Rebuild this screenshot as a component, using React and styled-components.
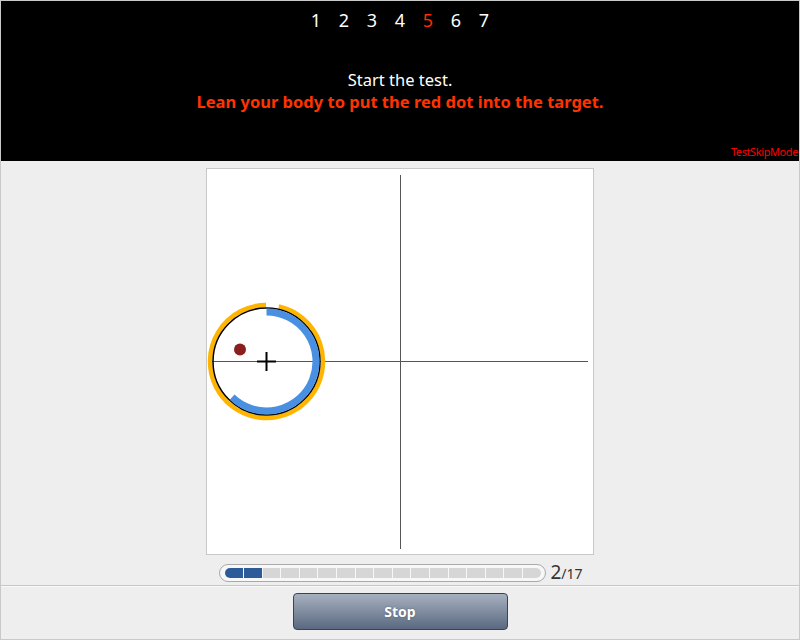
import React from 'react';
import styled, { createGlobalStyle } from 'styled-components';

const GlobalStyle = createGlobalStyle`
  html, body {
    margin: 0;
    padding: 0;
    background: #eeeeee;
  }
  * {
    box-sizing: border-box;
  }
`

const Frame = styled.div`
  width: 800px;
  height: 640px;
  border: 1px solid #c9c9c9;
  display: flex;
  flex-direction: column;
  background: #eeeeee;
  font-family: "Noto Sans", "Open Sans", sans-serif;
  overflow: hidden;
`

const Header = styled.header`
  height: 160px;
  background: #000;
  display: flex;
  flex-direction: column;
  align-items: center;
  position: relative;
`

const Steps = styled.div`
  display: flex;
  margin-top: 6px;
`

const Step = styled.span`
  width: 28px;
  text-align: center;
  font-size: 18px;
  line-height: 26px;
  color: ${props => props.current ? '#ff2a00' : '#ffffff'};
`

const Message = styled.div`
  margin-top: 36px;
  text-align: center;
  font-size: 16.5px;
  line-height: 22px;
`

const Plain = styled.div`
  color: #fff;
`

const Instruction = styled.div`
  color: #ff3300;
  font-weight: 700;
`

const SkipMode = styled.span`
  position: absolute;
  right: 1px;
  bottom: 2px;
  color: #ff0000;
  font-size: 11px;
  letter-spacing: -0.4px;
`

const Main = styled.main`
  flex: 1;
  display: flex;
  flex-direction: column;
  align-items: center;
  padding-top: 7px;
`

const Chart = styled.div`
  width: 388px;
  height: 387px;
  background: #fff;
  border: 1px solid #c8c8c8;
  svg {
    display: block;
  }
`

const ProgressRow = styled.div`
  margin-top: 7px;
  margin-left: 2px;
  display: flex;
  align-items: center;
  gap: 4px;
`

const Track = styled.div`
  width: 327px;
  height: 18px;
  border: 1px solid #a9a9a9;
  border-radius: 9px;
  background: #f7f7f7;
  padding: 3px 5px 3px 5px;
  display: flex;
  gap: 1px;
`

const Segment = styled.div`
  flex: 1;
  height: 10px;
  background: ${props => props.filled ? '#2d5b99' : '#d6d6d6'};
  &:first-child {
    border-radius: 5px 0 0 5px;
  }
  &:last-child {
    border-radius: 0 5px 5px 0;
  }
`

const Count = styled.span`
  color: #333;
  font-size: 19px;
  line-height: 20px;
  small {
    font-size: 14px;
  }
`

const Footer = styled.footer`
  height: 54px;
  border-top: 1px solid #c6c6c6;
  box-shadow: inset 0 1px 0 #f9f9f9;
  display: flex;
  justify-content: center;
  padding-top: 7px;
`

const StopButton = styled.button`
  width: 215px;
  height: 37px;
  border: 1px solid #3b4352;
  border-radius: 4px;
  background: linear-gradient(#a6b1bf, #5a6981);
  color: #fff;
  font-family: inherit;
  font-weight: 700;
  font-size: 14px;
  text-shadow: 0 0 2px rgba(0, 0, 0, 0.35);
  cursor: pointer;
`

const point = (cx, cy, r, deg) => {
  const a = (deg * Math.PI) / 180
  return [cx + r * Math.sin(a), cy - r * Math.cos(a)]
}

const arc = (cx, cy, r, from, to) => {
  const [x1, y1] = point(cx, cy, r, from)
  const [x2, y2] = point(cx, cy, r, to)
  const large = to - from > 180 ? 1 : 0
  return `M ${x1} ${y1} A ${r} ${r} 0 ${large} 1 ${x2} ${y2}`
}

const Target = ({ cx, cy }) => (
  <g>
    <path d={arc(cx, cy, 56.5, 12.5, 359.5)} fill="none" stroke="#ffb400" strokeWidth="4.5" />
    <circle cx={cx} cy={cy} r="53.5" fill="none" stroke="#000" strokeWidth="1.5" />
    <path d={arc(cx, cy, 49.5, 0, 224)} fill="none" stroke="#4a90e2" strokeWidth="7" />
    <line x1={cx - 9.5} y1={cy} x2={cx + 9.5} y2={cy} stroke="#000" strokeWidth="2" />
    <line x1={cx} y1={cy - 9.5} x2={cx} y2={cy + 9.5} stroke="#000" strokeWidth="2" />
  </g>
)

const steps = [1, 2, 3, 4, 5, 6, 7]
const total = 17
const done = 2

export default function App() {
  return (
    <>
      <GlobalStyle />
      <Frame>
        <Header>
          <Steps>
            {steps.map(n => <Step key={n} current={n === 5}>{n}</Step>)}
          </Steps>
          <Message>
            <Plain>Start the test.</Plain>
            <Instruction>Lean your body to put the red dot into the target.</Instruction>
          </Message>
          <SkipMode>TestSkipMode</SkipMode>
        </Header>
        <Main>
          <Chart>
            <svg width="386" height="385" viewBox="0 0 386 385">
              <line x1="193.5" y1="6" x2="193.5" y2="380" stroke="#555" strokeWidth="1" />
              <line x1="5" y1="192.5" x2="381" y2="192.5" stroke="#555" strokeWidth="1" />
              <Target cx={59.5} cy={192.5} />
              <circle cx="33" cy="180.5" r="6" fill="#8b1f1f" />
            </svg>
          </Chart>
          <ProgressRow>
            <Track>
              {Array.from({ length: total }, (_, i) => <Segment key={i} filled={i < done} />)}
            </Track>
            <Count>{done}<small>/{total}</small></Count>
          </ProgressRow>
        </Main>
        <Footer>
          <StopButton>Stop</StopButton>
        </Footer>
      </Frame>
    </>
  )
}
